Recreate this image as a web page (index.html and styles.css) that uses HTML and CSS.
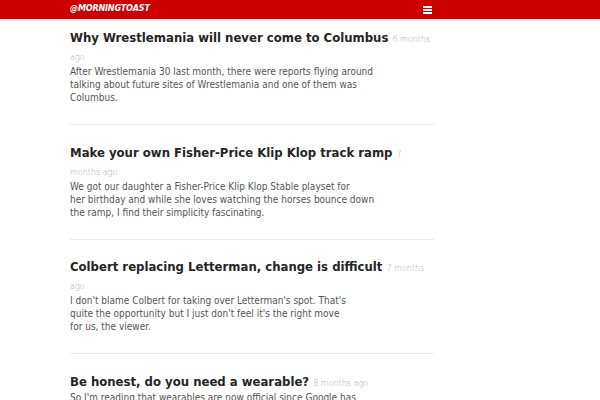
FILE: index.html
```html
<!DOCTYPE html>
<html>
<head>
<meta charset="utf-8">
<link rel="stylesheet" href="styles.css">
</head>
<body>
<header class="topbar">
  <div class="topbar-inner">
    <a class="logo" href="#">@MORNINGTOAST</a>
    <span class="menu" aria-label="menu">
      <svg width="9" height="8" viewBox="0 0 9 8"><rect x="0" y="0" width="9" height="2" fill="#fff"/><rect x="0" y="3" width="9" height="2" fill="#fff"/><rect x="0" y="6" width="9" height="2" fill="#fff"/></svg>
    </span>
  </div>
</header>
<main class="posts">
  <article class="post">
    <h2 class="post-title">Why Wrestlemania will never come to Columbus <span class="meta">6 months ago</span></h2>
    <p class="excerpt">After Wrestlemania 30 last month, there were reports flying around<br>talking about future sites of Wrestlemania and one of them was<br>Columbus.</p>
  </article>
  <article class="post">
    <h2 class="post-title">Make your own Fisher-Price Klip Klop track ramp <span class="meta">7 months ago</span></h2>
    <p class="excerpt">We got our daughter a Fisher-Price Klip Klop Stable playset for<br>her birthday and while she loves watching the horses bounce down<br>the ramp, I find their simplicity fascinating.</p>
  </article>
  <article class="post">
    <h2 class="post-title">Colbert replacing Letterman, change is difficult <span class="meta">7 months ago</span></h2>
    <p class="excerpt">I don't blame Colbert for taking over Letterman's spot. That's<br>quite the opportunity but I just don't feel it's the right move<br>for us, the viewer.</p>
  </article>
  <article class="post">
    <h2 class="post-title">Be honest, do you need a wearable? <span class="meta">8 months ago</span></h2>
    <p class="excerpt">So I'm reading that wearables are now official since Google has<br>announced Android Wear and a couple of watches to go with it.</p>
  </article>
</main>
</body>
</html>
```
FILE: styles.css
```css
html, body {
  margin: 0;
  padding: 0;
  background: #fff;
}
body {
  font-family: "DejaVu Sans Condensed", "DejaVu Sans", sans-serif;
  color: #555;
}
.topbar {
  background: #cc0000;
  height: 19px;
}
.topbar-inner {
  width: 364px;
  margin-left: 70px;
  height: 19px;
  display: flex;
  align-items: center;
  justify-content: space-between;
}
.logo {
  color: #fff;
  text-decoration: none;
  font-family: "DejaVu Sans Condensed", "DejaVu Sans", sans-serif;
  font-weight: bold;
  font-style: italic;
  font-size: 9px;
  letter-spacing: -0.2px;
  line-height: 1;
  margin-top: -2px;
}
.menu {
  display: flex;
  margin-right: 2px;
  margin-top: 1px;
}
.posts {
  width: 364px;
  margin-left: 70px;
  padding-top: 10px;
}
.post {
  padding: 0 0 20px;
  border-bottom: 1px solid #ececec;
  margin-bottom: 18.7px;
}
.post-title {
  margin: 0;
  font-size: 13px;
  line-height: 18px;
  font-weight: bold;
  color: #252525;
}
.meta {
  font-family: "DejaVu Sans", sans-serif;
  font-weight: 200;
  font-size: 8px;
  line-height: 8px;
  color: #a8a8a8;
}
.excerpt {
  margin: 0;
  font-size: 10px;
  line-height: 13px;
  color: #555;
}
```
